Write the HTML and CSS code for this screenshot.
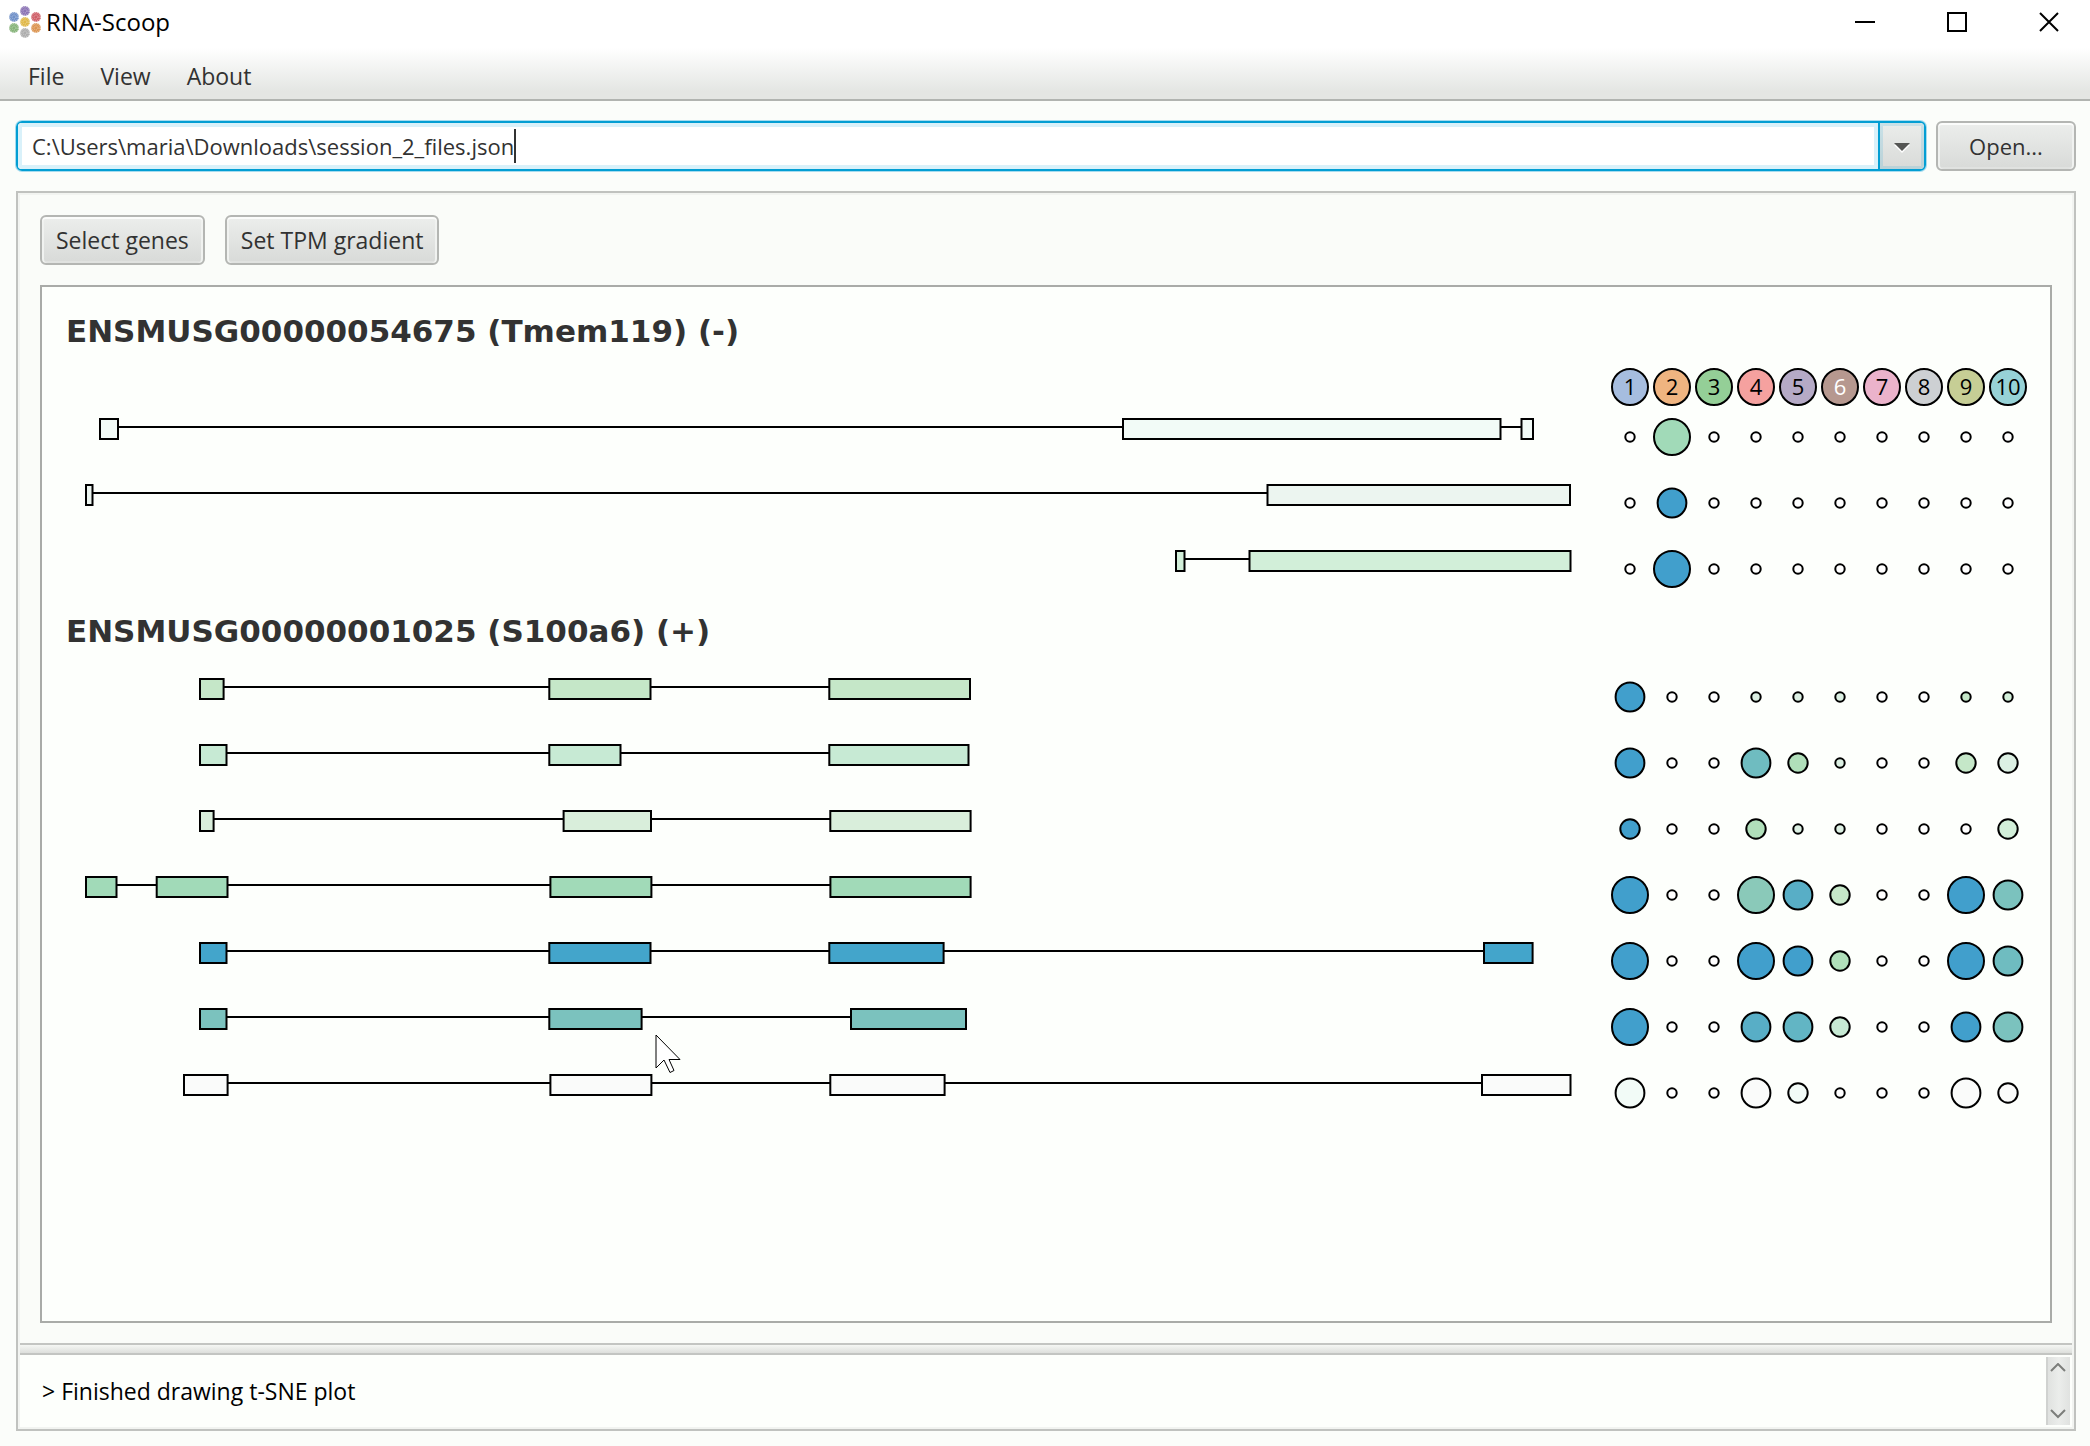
FILE: index.html
```html
<!DOCTYPE html>
<html lang="en">
<head>
<meta charset="utf-8">
<title>RNA-Scoop</title>
<link rel="stylesheet" href="styles.css">
</head>
<body>
<header class="titlebar">
  <svg class="logo" viewBox="0 0 34 34" aria-hidden="true">
    <g stroke="#fff" stroke-width="1" stroke-dasharray="1 1">
      <circle cx="17" cy="6" r="5" fill="#8b73b5"/>
      <circle cx="6" cy="12" r="5" fill="#6f90c8"/>
      <circle cx="28" cy="12" r="5" fill="#cf5f68"/>
      <circle cx="17" cy="17" r="5" fill="#e0b848"/>
      <circle cx="6" cy="23" r="5" fill="#85b378"/>
      <circle cx="28" cy="23" r="5" fill="#dc9450"/>
      <circle cx="17" cy="28" r="5" fill="#adadad"/>
    </g>
    <g fill="none" stroke="#fff" stroke-opacity=".5" stroke-dasharray="1 1">
      <circle cx="17" cy="6" r="2"/><circle cx="6" cy="12" r="2"/><circle cx="28" cy="12" r="2"/><circle cx="17" cy="17" r="2"/><circle cx="6" cy="23" r="2"/><circle cx="28" cy="23" r="2"/><circle cx="17" cy="28" r="2"/>
      <circle cx="17" cy="6" r="4"/><circle cx="6" cy="12" r="4"/><circle cx="28" cy="12" r="4"/><circle cx="17" cy="17" r="4"/><circle cx="6" cy="23" r="4"/><circle cx="28" cy="23" r="4"/><circle cx="17" cy="28" r="4"/>
    </g>
  </svg>
  <h1 class="title">RNA-Scoop</h1>
  <div class="window-buttons">
    <button class="window-button" aria-label="Minimize"><svg width="20" height="20"><path d="M0 10H20"/></svg></button>
    <button class="window-button" aria-label="Maximize"><svg width="20" height="20"><path d="M1 1H19V19H1Z"/></svg></button>
    <button class="window-button" aria-label="Close"><svg width="20" height="20"><path d="M1 1L19 19M19 1L1 19"/></svg></button>
  </div>
</header>
<nav class="menubar">
  <button class="menu">File</button>
  <button class="menu">View</button>
  <button class="menu">About</button>
</nav>
<main class="content">
  <div class="path-row">
    <div class="combo">
      <div class="combo-field">
        <input class="combo-input" type="text" aria-label="Session file" value="C:\Users\maria\Downloads\session_2_files.json" spellcheck="false">
        <span class="caret"></span>
      </div>
      <button class="combo-arrow" aria-label="Show recent files"><svg width="16" height="10"><path d="M0 2H16L8 10Z" fill="#fff"/><path d="M0 0H16L8 8Z" fill="#555654"/></svg></button>
    </div>
    <button class="button open">Open...</button>
  </div>
  <div class="split">
    <section class="pane">
      <div class="toolbar">
        <button class="button">Select genes</button>
        <button class="button">Set TPM gradient</button>
      </div>
      <div class="canvas">
        <article class="gene">
          <h2 class="gene-name">ENSMUSG00000054675 (Tmem119) (-)</h2>
          <div class="clusters">
            <span class="cluster k1">1</span><span class="cluster k2">2</span><span class="cluster k3">3</span><span class="cluster k4">4</span><span class="cluster k5">5</span><span class="cluster k6">6</span><span class="cluster k7">7</span><span class="cluster k8">8</span><span class="cluster k9">9</span><span class="cluster k10">10</span>
          </div>
          <div class="plots">
            <svg class="isoforms three" viewBox="0 0 1567 198" preserveAspectRatio="none">
              <path d="M70 19H1485M48 85H1230M1140 151H1212"/>
              <g fill="#f2fbf7"><rect x="58" y="11" width="18" height="20"/><rect x="1081" y="11" width="377.5" height="20"/><rect x="1479.5" y="11" width="11.5" height="20"/></g>
              <g fill="#ecf5f0"><rect x="44" y="77" width="6.5" height="20"/><rect x="1225.5" y="77" width="302.5" height="20"/></g>
              <g fill="#d2efd9"><rect x="1134" y="143" width="8.5" height="20"/><rect x="1207.5" y="143" width="321" height="20"/></g>
            </svg>
            <svg class="dots three" viewBox="0 0 420 198">
              <g fill="#fff"><circle cx="21" cy="29" r="4.7"/><circle cx="105" cy="29" r="4.7"/><circle cx="147" cy="29" r="4.7"/><circle cx="189" cy="29" r="4.7"/><circle cx="231" cy="29" r="4.7"/><circle cx="273" cy="29" r="4.7"/><circle cx="315" cy="29" r="4.7"/><circle cx="357" cy="29" r="4.7"/><circle cx="399" cy="29" r="4.7"/></g>
              <circle cx="63" cy="29" r="18" fill="#a1dab8"/>
              <g fill="#fff"><circle cx="21" cy="95" r="4.7"/><circle cx="105" cy="95" r="4.7"/><circle cx="147" cy="95" r="4.7"/><circle cx="189" cy="95" r="4.7"/><circle cx="231" cy="95" r="4.7"/><circle cx="273" cy="95" r="4.7"/><circle cx="315" cy="95" r="4.7"/><circle cx="357" cy="95" r="4.7"/><circle cx="399" cy="95" r="4.7"/></g>
              <circle cx="63" cy="95" r="14.4" fill="#419fcc"/>
              <g fill="#fff"><circle cx="21" cy="161" r="4.7"/><circle cx="105" cy="161" r="4.7"/><circle cx="147" cy="161" r="4.7"/><circle cx="189" cy="161" r="4.7"/><circle cx="231" cy="161" r="4.7"/><circle cx="273" cy="161" r="4.7"/><circle cx="315" cy="161" r="4.7"/><circle cx="357" cy="161" r="4.7"/><circle cx="399" cy="161" r="4.7"/></g>
              <circle cx="63" cy="161" r="18" fill="#419fcc"/>
            </svg>
          </div>
        </article>
        <article class="gene">
          <h2 class="gene-name">ENSMUSG00000001025 (S100a6) (+)</h2>
          <div class="plots">
            <svg class="isoforms seven" viewBox="0 0 1567 462" preserveAspectRatio="none">
              <path d="M160 19H800M160 85H800M160 151H800M50 217H800M160 283H1450M160 349H820M150 415H1450"/>
              <g fill="#c5e7c8"><rect x="158" y="11" width="23.6" height="20"/><rect x="507.3" y="11" width="101.2" height="20"/><rect x="787.3" y="11" width="140.7" height="20"/></g>
              <g fill="#c7ead4"><rect x="158" y="77" width="26.5" height="20"/><rect x="507.3" y="77" width="71.2" height="20"/><rect x="787.3" y="77" width="139.2" height="20"/></g>
              <g fill="#d9eedb"><rect x="158" y="143" width="13.6" height="20"/><rect x="521.6" y="143" width="87.4" height="20"/><rect x="788.3" y="143" width="140.3" height="20"/></g>
              <g fill="#a1dab8"><rect x="44" y="209" width="30.5" height="20"/><rect x="114.7" y="209" width="70.8" height="20"/><rect x="508.4" y="209" width="101" height="20"/><rect x="788.4" y="209" width="140.2" height="20"/></g>
              <g fill="#43a5cb"><rect x="158" y="275" width="26.5" height="20"/><rect x="507.3" y="275" width="101.2" height="20"/><rect x="787.3" y="275" width="114.3" height="20"/><rect x="1442" y="275" width="48.6" height="20"/></g>
              <g fill="#7bc2be"><rect x="158" y="341" width="26.5" height="20"/><rect x="507.3" y="341" width="92.3" height="20"/><rect x="809" y="341" width="115" height="20"/></g>
              <g fill="#fafbfa"><rect x="142" y="407" width="43.6" height="20"/><rect x="508.4" y="407" width="101" height="20"/><rect x="788.3" y="407" width="114.3" height="20"/><rect x="1440" y="407" width="88.500" height="20"/></g>
            </svg>
            <svg class="dots seven" viewBox="0 0 420 462">
              <g fill="#fff">
                <circle cx="63" cy="29" r="4.7"/><circle cx="105" cy="29" r="4.7"/><circle cx="273" cy="29" r="4.7"/><circle cx="315" cy="29" r="4.7"/>
                <circle cx="63" cy="95" r="4.7"/><circle cx="105" cy="95" r="4.7"/><circle cx="273" cy="95" r="4.7"/><circle cx="315" cy="95" r="4.7"/>
                <circle cx="63" cy="161" r="4.7"/><circle cx="105" cy="161" r="4.7"/><circle cx="273" cy="161" r="4.7"/><circle cx="315" cy="161" r="4.7"/><circle cx="357" cy="161" r="4.7"/>
                <circle cx="63" cy="227" r="4.7"/><circle cx="105" cy="227" r="4.7"/><circle cx="273" cy="227" r="4.7"/><circle cx="315" cy="227" r="4.7"/>
                <circle cx="63" cy="293" r="4.7"/><circle cx="105" cy="293" r="4.7"/><circle cx="273" cy="293" r="4.7"/><circle cx="315" cy="293" r="4.7"/>
                <circle cx="63" cy="359" r="4.7"/><circle cx="105" cy="359" r="4.7"/><circle cx="273" cy="359" r="4.7"/><circle cx="315" cy="359" r="4.7"/>
                <circle cx="63" cy="425" r="4.7"/><circle cx="105" cy="425" r="4.7"/><circle cx="231" cy="425" r="4.7"/><circle cx="273" cy="425" r="4.7"/><circle cx="315" cy="425" r="4.7"/>
              </g>
              <g fill="#dcf0e3"><circle cx="147" cy="29" r="4.7"/><circle cx="189" cy="29" r="4.7"/><circle cx="231" cy="29" r="4.7"/><circle cx="231" cy="95" r="4.7"/><circle cx="189" cy="161" r="4.7"/><circle cx="231" cy="161" r="4.7"/><circle cx="399" cy="95" r="9.7"/></g>
              <g fill="#c5e7c8"><circle cx="357" cy="29" r="4.7"/><circle cx="357" cy="95" r="9.7"/><circle cx="231" cy="227" r="9.7"/></g>
              <g fill="#d2efd9"><circle cx="399" cy="29" r="4.7"/><circle cx="399" cy="161" r="9.7"/></g>
              <g fill="#b0dfba"><circle cx="189" cy="95" r="9.7"/><circle cx="147" cy="161" r="9.7"/><circle cx="231" cy="293" r="9.7"/></g>
              <circle cx="231" cy="359" r="9.7" fill="#c7ead4"/>
              <g fill="#419fcc"><circle cx="21" cy="29" r="14.4"/><circle cx="21" cy="95" r="14.4"/><circle cx="21" cy="161" r="9.7"/><circle cx="21" cy="227" r="18"/><circle cx="21" cy="293" r="18"/><circle cx="21" cy="359" r="18"/><circle cx="357" cy="227" r="18"/><circle cx="147" cy="293" r="18"/><circle cx="189" cy="293" r="14.4"/><circle cx="357" cy="293" r="18"/><circle cx="357" cy="359" r="14.4"/></g>
              <g fill="#6fbcc0"><circle cx="147" cy="95" r="14.4"/><circle cx="399" cy="293" r="14.4"/></g>
              <circle cx="147" cy="227" r="18" fill="#8ac9b9"/>
              <g fill="#58aec6"><circle cx="189" cy="227" r="14.4"/><circle cx="147" cy="359" r="14.4"/></g>
              <circle cx="189" cy="359" r="14.4" fill="#62b5c4"/>
              <g fill="#7bc2be"><circle cx="399" cy="227" r="14.4"/><circle cx="399" cy="359" r="14.4"/></g>
              <g fill="#f2fbf7"><circle cx="21" cy="425" r="14.4"/><circle cx="189" cy="425" r="9.7"/></g>
              <g fill="#fafbfa"><circle cx="147" cy="425" r="14.4"/><circle cx="357" cy="425" r="14.4"/><circle cx="399" cy="425" r="9.7"/></g>
            </svg>
          </div>
        </article>
        <svg class="pointer" width="28" height="42" aria-hidden="true"><path d="M1 1V34L9 26L15 38.500L19 36.500L14 25.500H25Z"/></svg>
      </div>
    </section>
    <div class="divider"></div>
    <section class="console">
      <textarea class="console-text" aria-label="Console" readonly>&gt; Finished drawing t-SNE plot</textarea>
      <div class="scrollbar">
        <button class="scroll-button" aria-label="Scroll up"><svg width="16" height="10"><path d="M1 8L8 1L15 8"/></svg></button>
        <button class="scroll-button" aria-label="Scroll down"><svg width="16" height="10"><path d="M1 1L8 8L15 1"/></svg></button>
      </div>
    </section>
  </div>
</main>
</body>
</html>
```
FILE: styles.css
```css
* { box-sizing: border-box; }

body {
  margin: 0;
  min-height: 100vh;
  display: flex;
  flex-direction: column;
  background: #fbfdfa;
  color: #323232;
  font-family: "Open Sans", "Noto Sans", sans-serif;
  font-size: 23px;
  line-height: 30px;
}

button, input, textarea { font: inherit; color: inherit; margin: 0; }
svg { display: block; }

.titlebar {
  display: flex;
  align-items: center;
  height: 48px;
  padding: 0 11px 4px 8px;
  background: #fff;
}
.logo { width: 34px; height: 34px; }
.title { margin: 0 0 0 4px; font-size: 24px; font-weight: 400; color: #000; }
.window-buttons { display: flex; gap: 12px; margin-left: auto; }
.window-button {
  display: flex;
  align-items: center;
  justify-content: center;
  width: 80px;
  height: 44px;
  padding: 0;
  border: 0;
  background: none;
}
.window-button:last-child { width: 60px; margin-left: 10px; }
.window-button svg { fill: none; stroke: #000; stroke-width: 2; }

.menubar {
  display: flex;
  gap: 36px;
  height: 53px;
  padding: 5px 28px 0;
  border-bottom: 2px solid #b1b4b0;
  background: linear-gradient(#fff, #e4e6e3 85%);
}
.menu { height: 45px; padding: 0; border: 0; background: none; }

.content {
  flex: 1;
  display: flex;
  flex-direction: column;
  gap: 20px;
  padding: 20px 14px 15px 16px;
}

.path-row { display: flex; gap: 10px; height: 50px; font-size: 22px; }
.combo {
  flex: 1;
  display: flex;
  border: 2px solid #039ed3;
  border-radius: 6px;
  box-shadow: 0 0 0 1px #a6dcef;
  overflow: hidden;
}
.combo-field {
  flex: 1;
  display: flex;
  align-items: center;
  padding-left: 10px;
  border: 4px solid #d9f1fa;
  background: #fff;
}
.combo-input {
  field-sizing: content;
  padding: 0;
  border: 0;
  outline: 0;
  background: none;
  height: 34px;
}
.caret { width: 2px; height: 34px; background: #323232; }
.combo-arrow {
  display: flex;
  align-items: center;
  justify-content: center;
  width: 46px;
  padding: 4px 0 0;
  border: 0;
  border-left: 2px solid #039ed3;
  background: linear-gradient(#ebedeb, #d8dad8);
  box-shadow: inset 0 0 0 3px rgb(3 158 211 / 14%);
}

.button {
  height: 50px;
  padding: 0 14px;
  border: 2px solid #b4b6b3;
  border-radius: 6px;
  background: linear-gradient(#eceeec, #d8dad8);
  box-shadow: inset 0 2px 0 #fbfcfb, inset 2px 0 0 #f0f2f0, inset -2px 0 0 #f0f2f0, inset 0 -2px 0 #e0e2e0;
}
.open { width: 140px; }

.split {
  flex: 1;
  display: flex;
  flex-direction: column;
  border: 2px solid #c0c2bf;
  background: #fafcf9;
  box-shadow: inset 0 0 0 2px #f2f4f1;
}
.pane {
  flex: 1;
  display: flex;
  flex-direction: column;
  gap: 20px;
  padding: 22px 22px 20px;
}
.toolbar { display: flex; gap: 20px; }
.canvas {
  flex: 1;
  position: relative;
  padding: 26px 21px 40px 0;
  border: 2px solid #a9aba8;
  background: #fdfffc;
}

.gene { margin-bottom: 7px; }
.gene-name {
  margin: 0 0 19px 24px;
  font: 700 31px/36px "DejaVu Sans", Verdana, sans-serif;
}
.clusters { display: flex; justify-content: flex-end; gap: 4px; padding: 0 2px 2px 0; }
.cluster {
  width: 38px;
  height: 38px;
  border: 2px solid #000;
  border-radius: 50%;
  color: #000;
  font-size: 22px;
  text-align: center;
  line-height: 32px;
}
.k1 { background: #a6bddf; }
.k2 { background: #efb480; }
.k3 { background: #94cf97; }
.k4 { background: #f5a19f; }
.k5 { background: #b5aac6; }
.k6 { background: #b6988f; color: #fff; }
.k7 { background: #ebb3cb; }
.k8 { background: #cdd0d3; }
.k9 { background: #c6ce95; }
.k10 { background: #97d2d6; }

.plots { display: flex; }
.plots svg { stroke: #000; stroke-width: 2; }
.three { height: 198px; }
.seven { height: 462px; }
.isoforms { flex: 1; min-width: 0; }
.isoforms * { vector-effect: non-scaling-stroke; }
.dots { width: 420px; }
.pointer { position: absolute; left: 613px; top: 747px; fill: #fff; stroke: #000; stroke-width: 1; }

.divider {
  height: 12px;
  margin: 0 2px;
  border: solid #c3c5c2;
  border-width: 2px 0;
  background: linear-gradient(#f5f7f4, #dddfdc);
}
.console {
  display: flex;
  height: 74px;
  margin: 0 2px;
  padding: 2px 2px 2px 0;
  border-bottom: 2px solid #f2f4f1;
  background: #fdfffc;
}
.console-text {
  flex: 1;
  padding: 19px 22px;
  border: 0;
  outline: 0;
  resize: none;
  overflow: hidden;
  background: none;
  color: #000;
}
.scrollbar {
  display: flex;
  flex-direction: column;
  justify-content: space-between;
  width: 24px;
  padding: 6px 0;
  border-left: 2px solid #d0d2d0;
  background: linear-gradient(90deg, #e0e2e0, #ebedeb 50%, #e0e2e0);
}
.scroll-button { padding: 0 0 0 2px; border: 0; background: none; }
.scroll-button svg { fill: none; stroke: #7c7e7b; stroke-width: 2; }
```
